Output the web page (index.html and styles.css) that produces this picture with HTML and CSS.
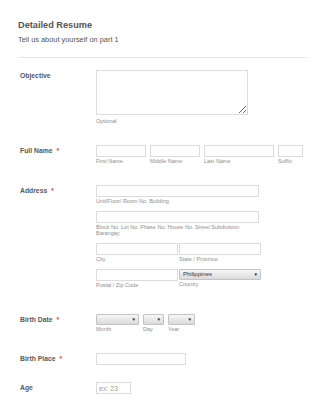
FILE: index.html
```html
<!DOCTYPE html>
<html lang="en">
<head>
  <meta charset="UTF-8">
  <meta name="viewport" content="width=device-width, initial-scale=1.0">
  <title>Detailed Resume</title>
  <link rel="stylesheet" href="styles.css">
</head>
<body>
  <div class="form-header">
    <div class="title">Detailed Resume</div>
    <div class="subtitle">Tell us about yourself on part 1</div>
  </div>

  <div class="form-section">
    <div class="form-line">
      <label class="form-label" for="objective">Objective</label>
      <div class="field">
        <textarea id="objective" class="textarea"></textarea>
        <span class="sublabel sublabel-area">Optional</span>
      </div>
    </div>

    <div class="form-line">
      <label class="form-label" for="firstName">Full Name<span class="req">*</span></label>
      <div class="field-row">
        <div class="field">
          <input type="text" id="firstName" class="input w-first">
          <span class="sublabel">First Name</span>
        </div>
        <div class="field">
          <input type="text" id="middleName" class="input w-first">
          <span class="sublabel">Middle Name</span>
        </div>
        <div class="field">
          <input type="text" id="lastName" class="input w-last">
          <span class="sublabel">Last Name</span>
        </div>
        <div class="field">
          <input type="text" id="suffix" class="input w-suffix">
          <span class="sublabel">Suffix</span>
        </div>
      </div>
    </div>

    <div class="form-line form-line-address">
      <label class="form-label" for="addr1">Address<span class="req">*</span></label>
      <div class="field">
        <div class="field">
          <input type="text" id="addr1" class="input w-addr">
          <span class="sublabel">Unit/Floor/ Room No. Building</span>
        </div>
        <div class="field addr-part">
          <input type="text" id="addr2" class="input w-addr">
          <span class="sublabel w-addr">Block No. Lot No. Phase No. House No. Street Subdivision Barangay</span>
        </div>
        <div class="field-row addr-part addr-pair">
          <div class="field">
            <input type="text" id="city" class="input w-half">
            <span class="sublabel">City</span>
          </div>
          <div class="field">
            <input type="text" id="state" class="input w-half">
            <span class="sublabel">State / Province</span>
          </div>
        </div>
        <div class="field-row addr-part addr-pair">
          <div class="field">
            <input type="text" id="postal" class="input w-half">
            <span class="sublabel">Postal / Zip Code</span>
          </div>
          <div class="field">
            <div class="select-wrap w-half">
              <select id="country" class="select">
                <option>Philippines</option>
              </select>
            </div>
            <span class="sublabel">Country</span>
          </div>
        </div>
      </div>
    </div>

    <div class="form-line">
      <label class="form-label" for="month">Birth Date<span class="req">*</span></label>
      <div class="field-row">
        <div class="field">
          <div class="select-wrap w-month">
            <select id="month" class="select"><option></option></select>
          </div>
          <span class="sublabel">Month</span>
        </div>
        <div class="field">
          <div class="select-wrap w-day">
            <select id="day" class="select"><option></option></select>
          </div>
          <span class="sublabel">Day</span>
        </div>
        <div class="field">
          <div class="select-wrap w-year">
            <select id="year" class="select"><option></option></select>
          </div>
          <span class="sublabel">Year</span>
        </div>
      </div>
    </div>

    <div class="form-line form-line-plain">
      <label class="form-label" for="birthPlace">Birth Place<span class="req">*</span></label>
      <div class="field">
        <input type="text" id="birthPlace" class="input w-place">
      </div>
    </div>

    <div class="form-line form-line-plain">
      <label class="form-label" for="age">Age</label>
      <div class="field">
        <input type="text" id="age" class="input w-age" placeholder="ex: 23">
      </div>
    </div>
  </div>
</body>
</html>
```

FILE: styles.css
```css
/* Basic styles */
body {
  font-family: "Liberation Sans", Arial, sans-serif;
  margin: 0;
  padding: 0;
  background-color: #fff;
  color: #555;
}
.form-header {
  margin: 0 18px;
  padding: 20px 0 13px;
  border-bottom: 1px solid #e8e8e8;
}
.title {
  font-size: 9.2px;
  font-weight: bold;
  line-height: 11px;
}
.subtitle {
  font-size: 7.4px;
  line-height: 9px;
  margin-top: 4px;
}
.form-section {
  padding-top: 1.5px;
}
.form-line {
  display: flex;
  align-items: flex-start;
  padding: 10.5px 0 10.5px 20px;
}
.form-line-address {
  padding-bottom: 15.5px;
}
.form-line-plain {
  padding-bottom: 7px;
}
.form-label {
  width: 76px;
  flex-shrink: 0;
  font-size: 6.8px;
  font-weight: bold;
  line-height: 10px;
  padding-top: 1px;
  color: #585858;
}
.req {
  color: #f23a3c;
  margin-left: 4px;
}
.field {
  display: flex;
  flex-direction: column;
  align-items: flex-start;
}
.field-row {
  display: flex;
  gap: 4px;
}
.addr-part {
  margin-top: 7px;
}
.addr-pair {
  gap: 1px;
}
.input {
  display: block;
  box-sizing: border-box;
  height: 12px;
  margin: 0;
  padding: 0 2px;
  border: 1px solid #dcdcdc;
  border-radius: 0;
  font-family: inherit;
  font-size: 7px;
  color: #555;
  background-color: #fff;
}
.input::placeholder {
  color: #a0a0a0;
}
.textarea {
  display: block;
  box-sizing: border-box;
  width: 152px;
  height: 45px;
  margin: 0;
  border: 1px solid #dcdcdc;
  font-family: inherit;
  font-size: 7px;
}
.sublabel {
  font-size: 5.5px;
  line-height: 6px;
  margin-top: 1px;
  color: #8e8e8e;
}
.sublabel-area {
  margin-top: 2.5px;
}
.w-first { width: 50px; }
.w-last { width: 70px; }
.w-suffix { width: 25px; }
.w-addr { width: 163px; }
.w-half { width: 82px; }
.w-month { width: 43px; }
.w-day { width: 21px; }
.w-year { width: 27px; }
.w-place { width: 90px; }
.w-age { width: 35px; }
.select-wrap {
  position: relative;
}
.select-wrap::after {
  content: "\25BC";
  position: absolute;
  right: 3px;
  top: 3px;
  font-size: 4.5px;
  line-height: 5px;
  color: #222;
  pointer-events: none;
}
.select {
  display: block;
  box-sizing: border-box;
  width: 100%;
  height: 11px;
  margin: 0;
  padding: 0 8px 0 3px;
  border: 1px solid #c4c4c4;
  border-radius: 1px;
  -webkit-appearance: none;
  appearance: none;
  background: linear-gradient(#f7f7f7, #dadada);
  font-family: inherit;
  font-size: 6px;
  line-height: 9px;
  color: #333;
}
```
